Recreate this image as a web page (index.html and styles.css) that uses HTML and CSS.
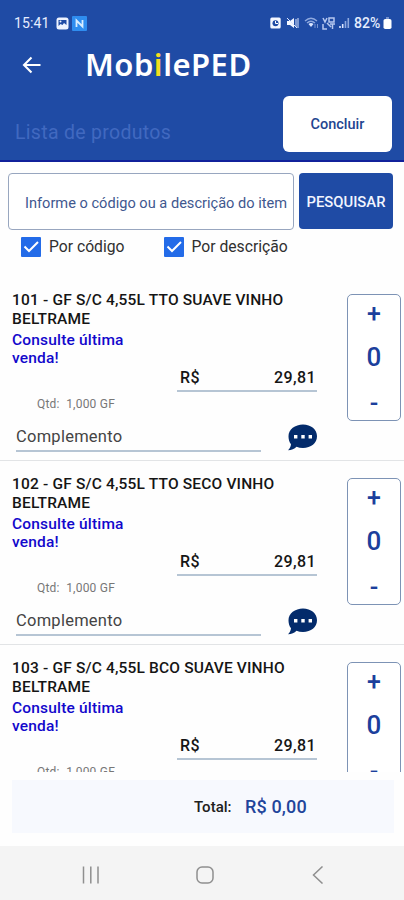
FILE: index.html
```html
<!DOCTYPE html>
<html lang="pt-BR">
<head>
<meta charset="utf-8">
<title>MobilePED</title>
<link rel="stylesheet" href="styles.css">
</head>
<body>
<header class="header">
  <div class="status">
    <span class="clock">15:41</span>
    <svg class="st-photo" width="13" height="13" viewBox="0 0 13 13"><rect x=".5" y=".5" width="12" height="12" rx="2.5" fill="#eef3ff"/><path d="M2.5 3h8v5L8 6 6.500 8 4.500 7 2.500 9z" fill="#1f4ba5"/><circle cx="4.500" cy="4.500" r="1" fill="#eef3ff"/></svg>
    <svg class="st-app" width="15" height="15" viewBox="0 0 15 15"><rect width="15" height="15" rx="1" fill="#2f8df0"/><path d="M4.500 11V4.500L10.500 10.500V4" fill="none" stroke="#d9edff" stroke-width="1.800"/></svg>
    <span class="grow"></span>
    <svg class="st-alarm" width="11" height="12" viewBox="0 0 11 12"><rect x=".3" y=".5" width="10.400" height="11" rx="1.500" fill="#f3f6ff"/><circle cx="5.500" cy="6.300" r="3" fill="#1f4ba5"/><path d="M5.500 4v2.500H8" fill="none" stroke="#fff"/></svg>
    <svg class="st-mute" width="13" height="12" viewBox="0 0 13 12"><path d="M1 4h3l4-3v10L4 8H1z" fill="#f3f6ff"/><path d="M1 1l10 10M10 2v8M12 1v10" stroke="#dce6ff" stroke-width="1"/></svg>
    <svg class="st-wifi" width="15" height="12" viewBox="0 0 15 12"><path d="M1 4Q7 -1.500 13 4M3 6Q7 2.500 11 6" fill="none" stroke="#8fa9df" stroke-width="1.300"/><path d="M4.500 7Q7 5 9.500 7L7 10z" fill="#dce6ff"/><path d="M11 7v4M13.500 7v4" stroke="#7894d0"/></svg>
    <svg class="st-volte" width="14" height="13" viewBox="0 0 14 13"><path d="M1 1l2 4 2-4M7 1h5v4H7zM1 7v5h4M8 7h5M10.500 7v5M5 6l4 4" fill="none" stroke="#b6c8ef" stroke-width="1.500"/></svg>
    <svg class="st-signal" width="11" height="12" viewBox="0 0 11 12"><path d="M1 9v2M3.700 7v4" stroke="#dce6ff" stroke-width="1.600"/><path d="M6.500 4v7M9.300 1v10" stroke="#8fa9df" stroke-width="1.600"/></svg>
    <span class="battery-text">82%</span>
    <svg class="st-battery" width="9" height="12" viewBox="0 0 9 12"><path d="M3 .5h3v1H3z" fill="#c8d6f5"/><rect x=".5" y="2" width="8" height="10" rx="1.800" fill="#fff"/></svg>
  </div>
  <div class="brand">
    <svg class="back" width="20" height="18" viewBox="0 0 20 18"><path d="M18.500 9H2M9.500 1.500L2 9l7.500 7.500" fill="none" stroke="#fff" stroke-width="2.100"/></svg>
    <h1 class="logo">Mob<span class="logo-i">i</span>lePED</h1>
  </div>
  <div class="subhead">
    <span class="subtitle">Lista de produtos</span>
    <button class="finish">Concluir</button>
  </div>
</header>
<section class="search">
  <div class="search-row">
    <div class="field"><span class="field-text">Informe o código ou a descrição do item</span></div>
    <button class="search-btn"><span>PESQUISAR</span></button>
  </div>
  <div class="checks">
    <label class="check"><svg width="20" height="20" viewBox="0 0 20 20"><rect width="20" height="20" rx="1" fill="#236be8"/><path d="M3.500 9.500l4.500 4.500 9-9" fill="none" stroke="#fff" stroke-width="2"/></svg><span>Por código</span></label>
    <label class="check"><svg width="20" height="20" viewBox="0 0 20 20"><rect width="20" height="20" rx="1" fill="#236be8"/><path d="M3.500 9.500l4.500 4.500 9-9" fill="none" stroke="#fff" stroke-width="2"/></svg><span>Por descrição</span></label>
  </div>
</section>
<main class="list">
  <article class="item">
    <div class="info">
      <h2 class="title"><span>101 - GF S/C 4,55L TTO SUAVE VINHO</span><br>BELTRAME</h2>
      <p class="last">Consulte última<br>venda!</p>
      <div class="price"><span>R$</span><span>29,81</span></div>
      <p class="qty">Qtd:&nbsp; 1,000 GF</p>
      <div class="note-row"><div class="note">Complemento</div><svg class="bubble" width="31" height="27" viewBox="0 0 31 27"><path d="M16 .5C24 .5 30 5.500 30 12.300S24 24 16 24c-2.400 0-4.600-.4-6.500-1.200C7.500 25 4.500 26.200 1 26.300c1.700-1.700 2.800-3.800 3-6C2.200 18 1.500 15 1.500 12.300 1.500 5.500 8 .5 16 .5z" fill="#032b6b"/><path d="M7 11h3.400v3.400H7zM14.300 11h3.400v3.400h-3.400zM21.600 11H25v3.400h-3.400z" fill="#fff"/></svg></div>
    </div>
    <div class="stepper"><span class="plus">+</span><span class="count">0</span><span class="minus">-</span></div>
  </article>
  <article class="item">
    <div class="info">
      <h2 class="title"><span>102 - GF S/C 4,55L TTO SECO VINHO</span><br>BELTRAME</h2>
      <p class="last">Consulte última<br>venda!</p>
      <div class="price"><span>R$</span><span>29,81</span></div>
      <p class="qty">Qtd:&nbsp; 1,000 GF</p>
      <div class="note-row"><div class="note">Complemento</div><svg class="bubble" width="31" height="27" viewBox="0 0 31 27"><path d="M16 .5C24 .5 30 5.500 30 12.300S24 24 16 24c-2.400 0-4.600-.4-6.500-1.200C7.500 25 4.500 26.200 1 26.300c1.700-1.700 2.800-3.800 3-6C2.200 18 1.500 15 1.500 12.300 1.500 5.500 8 .5 16 .5z" fill="#032b6b"/><path d="M7 11h3.400v3.400H7zM14.300 11h3.400v3.400h-3.400zM21.600 11H25v3.400h-3.400z" fill="#fff"/></svg></div>
    </div>
    <div class="stepper"><span class="plus">+</span><span class="count">0</span><span class="minus">-</span></div>
  </article>
  <article class="item">
    <div class="info">
      <h2 class="title"><span>103 - GF S/C 4,55L BCO SUAVE VINHO</span><br>BELTRAME</h2>
      <p class="last">Consulte última<br>venda!</p>
      <div class="price"><span>R$</span><span>29,81</span></div>
      <p class="qty">Qtd:&nbsp; 1,000 GF</p>
    </div>
    <div class="stepper"><span class="plus">+</span><span class="count">0</span><span class="minus">-</span></div>
  </article>
</main>
<footer class="total"><span class="total-label">Total:</span><span class="total-value">R$ 0,00</span></footer>
<nav class="nav">
  <svg width="18" height="18" viewBox="0 0 18 18"><path d="M1.500 .5v17M8.800 .5v17M16 .5v17" stroke="#8f8f8f" stroke-width="1.500"/></svg>
  <svg width="18" height="18" viewBox="0 0 18 18"><rect x="1" y="1" width="16" height="16" rx="5" fill="none" stroke="#8f8f8f" stroke-width="1.500"/></svg>
  <svg width="18" height="18" viewBox="0 0 18 18"><path d="M13.500 .5L4.500 9l9 8.500" fill="none" stroke="#8f8f8f" stroke-width="1.500"/></svg>
</nav>
</body>
</html>
```
FILE: styles.css
```css
* { box-sizing: border-box; }
body { margin: 0; width: 404px; height: 900px; overflow: hidden; display: flex; flex-direction: column; background: #fefefe; font-family: Roboto, "Liberation Sans", sans-serif; }
h1, h2, p { margin: 0; }
button { border: 0; padding: 0; font-family: inherit; }
svg { display: block; flex: none; }

.header { height: 162px; flex: none; background: #1f4ba5; border-bottom: 2px solid #10209a; display: flex; flex-direction: column; }
.status { height: 46px; padding: 0 12px 0 14px; display: flex; align-items: center; color: #e6edff; }
.clock { width: 42px; font-size: 14px; letter-spacing: .1px; }
.st-app { margin-left: 3px; }
.grow { flex: 1; }
.st-mute { margin-left: 5px; }
.st-wifi { margin-left: 5px; }
.st-volte { margin-left: 3px; }
.st-signal { margin-left: 3px; }
.battery-text { margin-left: 4px; width: 28px; font-size: 14px; font-weight: 500; }
.st-battery { margin-left: 1px; }
.brand { height: 40px; display: flex; align-items: center; padding-left: 22px; }
.back { margin-top: -2px; }
.logo { margin: -4px 0 0 43px; font: 600 31px/40px "Noto Sans", "Open Sans", sans-serif; color: #fff; letter-spacing: .5px; }
.logo-i { color: #f5df1c; }
.subhead { height: 74px; display: flex; justify-content: space-between; padding: 10px 12px 0 15px; }
.subtitle { padding-top: 25px; font-size: 19.500px; line-height: 24px; color: #4169c0; letter-spacing: .3px; }
.finish { width: 109px; height: 56px; background: #fff; border-radius: 6px; color: #1f4590; font-size: 14.500px; font-weight: 500; }

.search { height: 101px; flex: none; padding: 11px 10px 0 8px; }
.search-row { display: flex; gap: 5px; height: 57px; }
.field { width: 286px; border: 1.5px solid #98a6bf; border-radius: 4px; display: flex; align-items: center; padding: 2px 0 0 16px; background: #fff; color: #41588f; font-size: 14.600px; white-space: nowrap; }
.search-btn { width: 94px; height: 56px; padding-top: 2px; background: #1f4ba5; border-radius: 4px; color: #f2f5ff; font-size: 14.800px; font-weight: 500; }
.checks { display: flex; padding: 7px 0 0 13px; }
.check { width: 142.500px; display: flex; gap: 8px; align-items: center; font-size: 15.700px; line-height: 20px; color: #303030; white-space: nowrap; }

.list { height: 509px; flex: none; overflow: hidden; padding-top: 14px; }
.item { height: 184px; border-bottom: 1.500px solid #e2e4e6; display: flex; justify-content: space-between; padding: 14px 3px 0 12px; }
.info { width: 307px; }
.title { font-size: 15.500px; line-height: 18.500px; font-weight: 500; letter-spacing: .17px; color: #151515; white-space: nowrap; }
.last { margin-top: 3px; font-size: 15.500px; line-height: 18px; font-weight: 500; letter-spacing: .18px; color: #1208cc; }
.price { margin: 0 2px 0 165px; height: 25px; padding: 0 1px 0 3px; border-bottom: 2.500px solid #b6c5d4; display: flex; justify-content: space-between; font-size: 16px; line-height: 21px; font-weight: 500; letter-spacing: .4px; color: #151515; }
.qty { margin: 3px 0 0 25px; font-size: 12px; line-height: 18px; letter-spacing: .22px; color: #777; }
.note-row { display: flex; justify-content: space-between; height: 33px; margin-top: 9px; }
.note { width: 245px; height: 30px; margin-left: 4px; border-bottom: 2px solid #b6c5d4; font-size: 16.500px; line-height: 30px; letter-spacing: .25px; color: #444; }
.bubble { margin: 2px 1px 0 0; }
.stepper { margin-top: 3px; width: 54px; height: 127px; border: 1.500px solid #7d93b5; border-radius: 5px; background: #fff; display: flex; flex-direction: column; align-items: center; color: #1c3f9c; font-weight: 500; }
.plus { font-size: 25px; line-height: 38px; }
.count { font-size: 26px; line-height: 49px; }
.minus { font-size: 25px; line-height: 44px; }

.total { margin: 8px 10px 0 12px; height: 53px; flex: none; background: #f7f9fe; display: flex; align-items: center; padding-left: 182px; font-weight: 500; }
.total-label { width: 51px; font-size: 15px; color: #202020; }
.total-value { font-size: 18px; letter-spacing: .15px; color: #1f459b; }
.nav { margin-top: auto; height: 54px; flex: none; background: #f4f4f4; display: flex; justify-content: space-between; align-items: center; padding: 3px 77px 0 82px; }
```
